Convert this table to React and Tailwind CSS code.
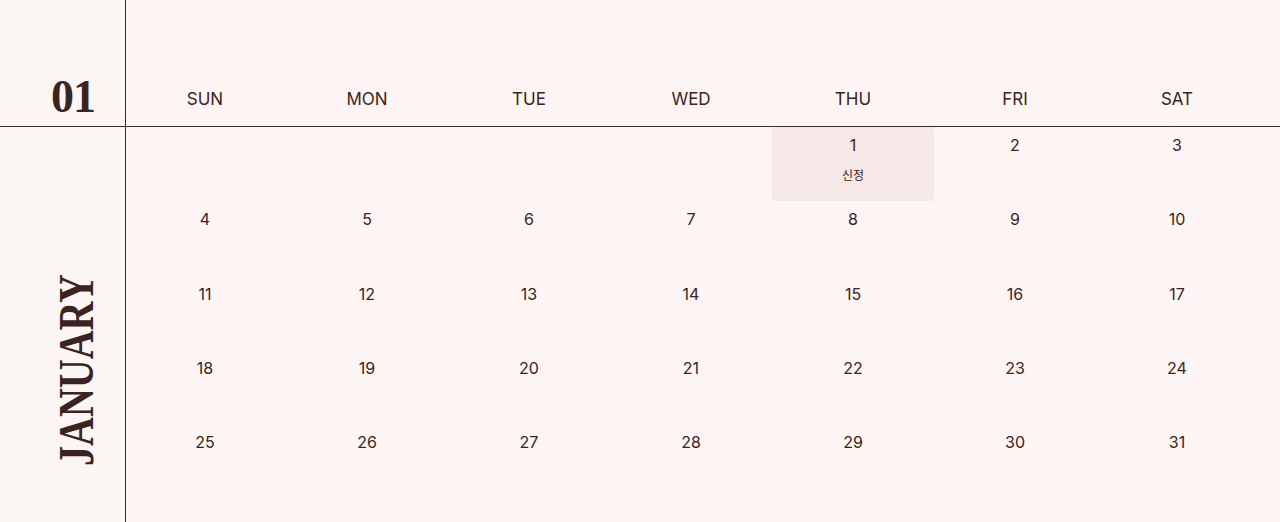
const DAYS = ['SUN', 'MON', 'TUE', 'WED', 'THU', 'FRI', 'SAT']

// January starts on Thursday
const CELLS = [
  ...Array(4).fill(null),
  ...Array.from({ length: 31 }, (_, i) => i + 1),
]

const HOLIDAYS = { 1: '신정' }

export default function App() {
  return (
    <div className="flex h-[522px] w-[1280px] bg-[#fcf5f4] text-[#3b2321] font-['Inter','Noto_Sans_CJK_KR',sans-serif]">
      <div className="flex w-[126px] shrink-0 flex-col border-r border-[#3a2a29] bg-[#fbf5f3]">
        <div className="flex h-[127px] items-end justify-end border-b border-[#3a2a29] pr-[30px] pb-[6px]">
          <span className="font-['Liberation_Serif',serif] text-[46px] font-bold leading-none tracking-[-1px]">01</span>
        </div>
        <div className="flex flex-1 flex-col items-center justify-end pb-[56px] pl-[28px]">
          <span className="rotate-180 scale-x-[1.25] font-['Liberation_Serif',serif] text-[40px] font-bold leading-none [writing-mode:vertical-rl]">
            JANUARY
          </span>
        </div>
      </div>

      <div className="-ml-[2px] flex flex-1 flex-col">
        <div className="grid h-[127px] grid-cols-[repeat(7,162px)] items-end border-b border-[#3a2a29] pb-[18px]">
          {DAYS.map(day => (
            <div key={day} className="text-center text-[17px] leading-none">{day}</div>
          ))}
        </div>
        <div className="grid grid-cols-[repeat(7,162px)] auto-rows-[74.25px]">
          {CELLS.map((date, i) => (
            <div
              key={i}
              className={`flex flex-col items-center pt-[9px] ${HOLIDAYS[date] ? 'rounded-sm bg-[#f5e8e6]' : ''}`}
            >
              {date && <span className="text-[16px] leading-[18px]">{date}</span>}
              {HOLIDAYS[date] && <span className="mt-[16px] text-[12px] leading-none">{HOLIDAYS[date]}</span>}
            </div>
          ))}
        </div>
      </div>
    </div>
  )
}
